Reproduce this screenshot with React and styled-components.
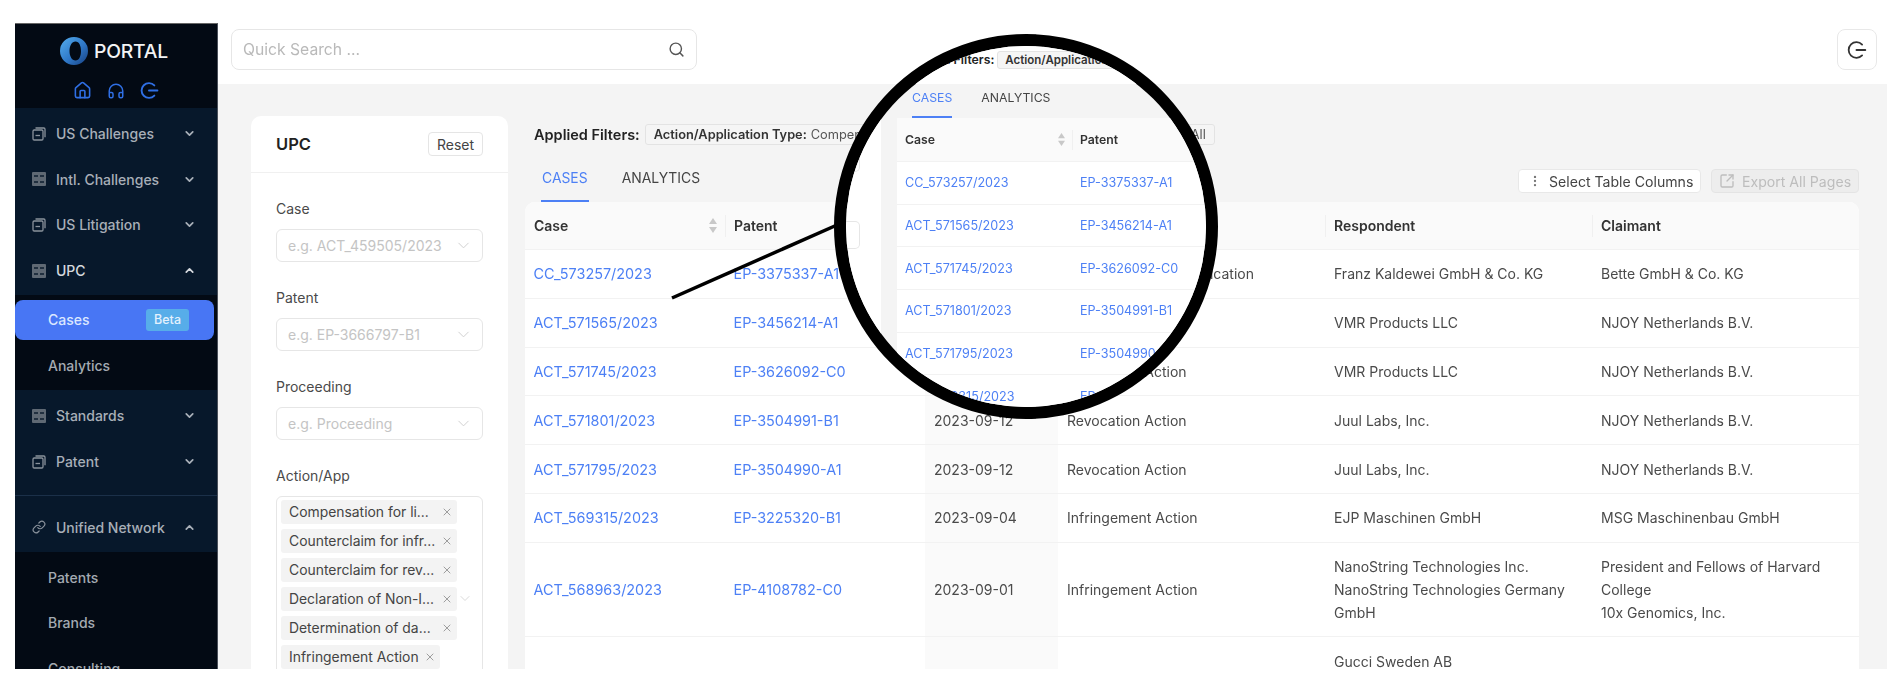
import React from "react";
import styled, { createGlobalStyle } from "styled-components";
import { ChevronDown, ChevronUp, Search, House, Headphones, Link as LinkIcon, EllipsisVertical, SquareArrowOutUpRight, X } from "lucide-react";

const Global = createGlobalStyle`
  html, body { margin: 0; padding: 0; background: #fff; }
  body { font-family: Inter, "Liberation Sans", sans-serif; color: #444; font-size: 14px; overflow: hidden; }
  * { box-sizing: border-box; }
`;

const Frame = styled.div`
  position: relative;
  display: flex;
  margin: 23px 13px 0 15px;
  height: 646px;
  overflow: hidden;
  filter: blur(0.6px);
`;

/* ---------- sidebar ---------- */
const Sidebar = styled.aside`
  width: 203px;
  flex: none;
  background: #030a14;
  border-right: 1px solid #4a505a;
  border-top: 1px solid #666;
  overflow: hidden;
`;
const Brand = styled.div`
  height: 84px;
  display: flex;
  flex-direction: column;
  align-items: center;
  padding-top: 13px;
`;
const LogoRow = styled.div`
  display: flex;
  align-items: center;
  gap: 6px;
  height: 28px;
  margin-right: 4px;
`;
const LogoText = styled.span`
  color: #f2f3f4;
  font-size: 19.3px;
  font-weight: 500;
  letter-spacing: -0.2px;
`;
const QuickIcons = styled.div`
  display: flex;
  align-items: center;
  gap: 15px;
  margin-top: 16px;
  color: #2f6fe4;
`;
const NavGroup = styled.div`
  background: #07182b;
  padding: ${p => p.$pad};
`;
const NavRow = styled.div`
  height: 45.6px;
  display: flex;
  align-items: center;
  padding: 0 21px 0 17px;
  gap: 10px;
  color: ${p => (p.$active ? "#d5d9de" : "#a8afb8")};
  font-weight: 500;
  font-size: 14px;
  span { flex: 1; white-space: nowrap; }
  svg { flex: none; }
`;
const Divider = styled.div`
  height: 1px;
  background: #1b3049;
  margin: 10.6px 0 8.5px;
`;
const SubGroup = styled.div`
  padding: ${p => p.$pad};
`;
const SubItem = styled.div`
  height: ${p => p.$h || 45.5}px;
  display: flex;
  align-items: center;
  padding-left: 33px;
  color: #a4aab2;
  font-weight: 500;
  font-size: 14px;
`;
const ActiveItem = styled.div`
  height: 40px;
  width: 199px;
  display: flex;
  align-items: center;
  justify-content: space-between;
  padding: 0 25px 0 33px;
  background: #4876f4;
  border-radius: 8px;
  color: #dbe7ff;
  font-weight: 500;
  font-size: 14px;
  margin-bottom: 6px;
`;
const Beta = styled.span`
  width: 43px;
  height: 22px;
  display: flex;
  align-items: center;
  justify-content: center;
  background: #57ade9;
  border-radius: 3px;
  font-size: 12.5px;
  color: #e3f1fd;
`;

/* ---------- main ---------- */
const Main = styled.main`
  flex: 1;
  min-width: 0;
  display: flex;
  flex-direction: column;
`;
const TopBar = styled.header`
  height: 61px;
  flex: none;
  display: flex;
  align-items: flex-start;
  justify-content: space-between;
  padding: 6px 10px 0 13px;
`;
const SearchBox = styled.div`
  width: 466px;
  height: 41px;
  display: flex;
  align-items: center;
  justify-content: space-between;
  padding: 0 11px;
  border: 1px solid #e6e6e6;
  border-radius: 8px;
  color: #b9b9b9;
  font-size: 15.7px;
  svg { color: #555; }
`;
const LogoutButton = styled.div`
  width: 40px;
  height: 41px;
  display: flex;
  align-items: center;
  justify-content: center;
  border: 1px solid #e8e8e8;
  border-radius: 8px;
  color: #333;
`;
const Content = styled.div`
  flex: 1;
  min-height: 0;
  display: flex;
  gap: 17px;
  padding: 32px 28px 0 33px;
  background: #f4f4f4;
  overflow: hidden;
`;

/* ---------- filter card ---------- */
const FilterCard = styled.section`
  width: 257px;
  flex: none;
  background: #fff;
  border-radius: 10px 10px 0 0;
`;
const CardHead = styled.div`
  height: 57px;
  display: flex;
  align-items: center;
  justify-content: space-between;
  padding: 0 25px;
  border-bottom: 1px solid #f0f0f0;
`;
const CardTitle = styled.h2`
  margin: 0;
  font-size: 16.5px;
  font-weight: 600;
  color: #222;
`;
const ResetButton = styled.div`
  width: 55px;
  height: 24px;
  display: flex;
  align-items: center;
  justify-content: center;
  border: 1px solid #e5e5e5;
  border-radius: 4px;
  font-size: 14px;
  color: #444;
`;
const CardBody = styled.div`
  padding: 26px 25px 0;
`;
const Field = styled.div`
  margin-bottom: 26.4px;
`;
const FieldLabel = styled.div`
  height: 20px;
  line-height: 20px;
  font-size: 14px;
  color: #4a4a4a;
  margin-bottom: 9.6px;
`;
const SelectBox = styled.div`
  height: 33px;
  display: flex;
  align-items: center;
  justify-content: space-between;
  padding: 0 9px 0 11px;
  border: 1px solid #e6e6e6;
  border-radius: 6px;
  color: #c4c4c4;
  font-size: 14px;
  svg { color: #cfcfcf; flex: none; }
`;
const MultiBox = styled.div`
  display: flex;
  align-items: center;
  justify-content: space-between;
  padding: 3px 9px 4px 4px;
  border: 1px solid #e6e6e6;
  border-radius: 6px;
  svg.chev { color: #cfcfcf; }
`;
const TagList = styled.div`
  display: flex;
  flex-direction: column;
  align-items: flex-start;
  gap: 5px;
`;
const Tag = styled.div`
  height: 24px;
  width: ${p => p.$w || 176}px;
  display: flex;
  align-items: center;
  justify-content: space-between;
  padding: 0 4px 0 8px;
  background: #f3f3f3;
  border-radius: 3px;
  font-size: 13.9px;
  color: #444;
  white-space: nowrap;
  svg { color: #888; flex: none; }
`;

/* ---------- results ---------- */
const Results = styled.section`
  flex: 1;
  min-width: 0;
  padding-top: 8px;
`;
const AppliedRow = styled.div`
  height: 21px;
  display: flex;
  align-items: center;
  gap: 5px;
  padding-left: 9px;
`;
const AppliedLabel = styled.strong`
  font-size: 14.5px;
  font-weight: 600;
  color: #222;
  white-space: nowrap;
`;
const AppliedTag = styled.div`
  width: 570px;
  height: 21px;
  display: flex;
  align-items: center;
  padding: 0 8px;
  background: #f5f5f5;
  border: 1px solid #e3e3e3;
  border-radius: 3px;
  font-size: 12.8px;
  color: #555;
  white-space: nowrap;
  overflow: hidden;
  b { font-weight: 600; color: #333; margin-right: 4px; }
  span { flex: 1; }
`;
const TabBar = styled.div`
  height: 57px;
  display: flex;
  align-items: flex-end;
  justify-content: space-between;
`;
const Tabs = styled.div`
  display: flex;
  gap: 32px;
  padding-left: 16px;
`;
const Tab = styled.div`
  padding: 0 1px 12px;
  line-height: 20px;
  font-size: 13.9px;
  color: ${p => (p.$active ? "#4d80f5" : "#444")};
  border-bottom: 2px solid ${p => (p.$active ? "#4d80f5" : "transparent")};
`;
const Tools = styled.div`
  display: flex;
  gap: 10px;
  margin-bottom: 9px;
`;
const ToolButton = styled.div`
  height: 24px;
  width: ${p => p.$w}px;
  display: flex;
  align-items: center;
  gap: 7px;
  padding-left: ${p => (p.$off ? 7 : 9)}px;
  font-size: 14.1px;
  white-space: nowrap;
  border: 1px solid ${p => (p.$off ? "#e4e4e4" : "#e8e8e8")};
  border-radius: 4px;
  background: ${p => (p.$off ? "#ededed" : "#fff")};
  color: ${p => (p.$off ? "#bdbdbd" : "#444")};
`;
const Table = styled.div`
  background: #fff;
  border-radius: 10px 10px 0 0;
  overflow: hidden;
`;
const Grid = styled.div`
  display: grid;
  grid-template-columns: 200px 200px 133px 267px 267px 267px;
`;
const HeadRow = styled(Grid)`
  height: 48px;
  background: #fafafa;
  border-bottom: 1px solid #f2f2f2;
`;
const HeadCell = styled.div`
  position: relative;
  display: flex;
  align-items: center;
  justify-content: space-between;
  padding: 0 8px 0 9px;
  font-weight: 600;
  font-size: 14px;
  color: #333;
  &:not(:first-child)::before {
    content: "";
    position: absolute;
    left: 0;
    top: 13px;
    height: 22px;
    width: 1px;
    background: #f0f0f0;
  }
`;
const Row = styled(Grid)`
  border-bottom: 1px solid #f2f2f2;
`;
const Cell = styled.div`
  display: flex;
  align-items: center;
  padding: 12.4px 9px;
  line-height: 23px;
  font-size: 14px;
  color: #4a4a4a;
  background: ${p => (p.$sorted ? "#fafafa" : "transparent")};
`;
const LinkCell = styled(Cell)`
  padding-left: 8.5px;
  font-size: 14.4px;
  color: #4d80f5;
`;
const MultiLine = styled.div`
  white-space: pre-line;
`;

/* ---------- magnifier overlay ---------- */
const Pointer = styled.svg`
  position: absolute;
  left: 0;
  top: 0;
  width: 100%;
  height: 100%;
  pointer-events: none;
`;
const Lens = styled.div`
  position: absolute;
  left: 819px;
  top: 11px;
  width: 384px;
  height: 385px;
  border: 12px solid #000;
  border-radius: 50%;
  background: #f4f4f4;
  overflow: hidden;
`;
const LensTop = styled.div`
  height: 38px;
  background: #fff;
  display: flex;
  align-items: flex-start;
  padding: 5px 0 0 59px;
  gap: 3px;
`;
const LensLabel = styled.strong`
  line-height: 18px;
  font-size: 12.25px;
  font-weight: 600;
  color: #222;
  white-space: nowrap;
`;
const LensTag = styled.div`
  width: 190px;
  height: 18px;
  padding-left: 7px;
  line-height: 16px;
  font-size: 11.5px;
  font-weight: 600;
  color: #333;
  background: #f5f5f5;
  border: 1px solid #e3e3e3;
  border-radius: 3px;
  white-space: nowrap;
  overflow: hidden;
`;
const LensBody = styled.div`
  display: flex;
  gap: 16px;
`;
const LensFilter = styled.div`
  width: 35px;
  flex: none;
  margin-top: 30px;
  padding-top: 30px;
  height: 320px;
  background: #fff;
  display: flex;
  flex-direction: column;
  gap: 49px;
`;
const LensInput = styled.div`
  width: 14px;
  height: 28px;
  border: 1px solid #e6e6e6;
  border-left: 0;
  border-radius: 0 5px 5px 0;
`;
const LensMain = styled.div`
  flex: 1;
`;
const LensTabs = styled.div`
  height: 34px;
  display: flex;
  align-items: flex-end;
  gap: 29px;
  padding-left: 15px;
`;
const LensTab = styled.div`
  padding-bottom: 10px;
  line-height: 16px;
  font-size: 12.25px;
  color: ${p => (p.$active ? "#4d80f5" : "#444")};
  border-bottom: 2px solid ${p => (p.$active ? "#4d80f5" : "transparent")};
`;
const LensTable = styled.div`
  background: #fff;
  border-radius: 9px 0 0 0;
`;
const LensGrid = styled.div`
  display: grid;
  grid-template-columns: 175px 175px;
`;
const LensHead = styled(LensGrid)`
  height: 44px;
  background: #fafafa;
  border-bottom: 1px solid #f2f2f2;
`;
const LensHeadCell = styled(HeadCell)`
  font-size: 12.25px;
  padding: 0 7px 0 8px;
  &:not(:first-child)::before { top: 12px; height: 20px; }
`;
const LensRow = styled(LensGrid)`
  height: 42.7px;
  border-bottom: 1px solid #f2f2f2;
  align-items: center;
  font-size: 12.6px;
  color: #4d80f5;
  span { padding-left: 8px; }
`;

/* ---------- drawn icons ---------- */
const StackIcon = () => (
  <svg width="14" height="14" viewBox="0 0 14 14" fill="none" stroke="#8a929c" strokeWidth="1.3">
    <rect x="1" y="3" width="10" height="10" rx="1.2" />
    <path d="M3.5 1h8.3a1.2 1.2 0 0 1 1.2 1.2v8" />
    <path d="M3.5 8.5h4.5" />
  </svg>
);
const GridIcon = () => (
  <svg width="14" height="14" viewBox="0 0 14 14">
    <rect width="14" height="14" rx="1" fill="#5f6974" />
    <rect x="2" y="3" width="4" height="2" fill="#07182b" opacity=".7" />
    <rect x="8" y="3" width="4" height="2" fill="#07182b" opacity=".7" />
    <rect x="2" y="9" width="4" height="2" fill="#07182b" opacity=".7" />
    <rect x="8" y="9" width="4" height="2" fill="#07182b" opacity=".7" />
  </svg>
);
const PowerIcon = ({ size = 18, width = 1.8 }) => (
  <svg width={size} height={size} viewBox="0 0 18 18" fill="none" stroke="currentColor" strokeWidth={width} strokeLinecap="round">
    <path d="M13.6 4.2A7 7 0 1 0 13.6 13.8" />
    <path d="M8.5 9H16.5" />
  </svg>
);
const Logo = () => (
  <svg width="28" height="28" viewBox="0 0 28 28">
    <defs>
      <linearGradient id="ring" x1="0" y1="0" x2="1" y2="1">
        <stop offset="0" stopColor="#55aeee" />
        <stop offset="0.55" stopColor="#2f78c8" />
        <stop offset="1" stopColor="#173f80" />
      </linearGradient>
    </defs>
    <path
      fillRule="evenodd"
      fill="url(#ring)"
      d="M14 0a14 14 0 1 1 0 28a14 14 0 1 1 0-28ZM15.5 4.5c-3.6 0-6 4.2-6 9.5s2.4 9.5 6 9.5s5.5-4.2 5.5-9.5s-1.9-9.5-5.5-9.5Z"
    />
  </svg>
);
const SortIcon = ({ w = 8, h = 17 }) => (
  <svg width={w} height={h} viewBox="0 0 8 17" fill="#c8c8c8">
    <path d="M4 1l4 6H0z" />
    <path d="M4 16L0 10h8z" />
  </svg>
);

const rows = [
  ["CC_573257/2023", "EP-3375337-A1", "2023-09-18", "Protective Letter Application", "Franz Kaldewei GmbH & Co. KG", "Bette GmbH & Co. KG"],
  ["ACT_571565/2023", "EP-3456214-A1", "2023-09-13", "Revocation Action", "VMR Products LLC", "NJOY Netherlands B.V."],
  ["ACT_571745/2023", "EP-3626092-C0", "2023-09-13", "Revocation Action", "VMR Products LLC", "NJOY Netherlands B.V."],
  ["ACT_571801/2023", "EP-3504991-B1", "2023-09-12", "Revocation Action", "Juul Labs, Inc.", "NJOY Netherlands B.V."],
  ["ACT_571795/2023", "EP-3504990-A1", "2023-09-12", "Revocation Action", "Juul Labs, Inc.", "NJOY Netherlands B.V."],
  ["ACT_569315/2023", "EP-3225320-B1", "2023-09-04", "Infringement Action", "EJP Maschinen GmbH", "MSG Maschinenbau GmbH"],
  ["ACT_568963/2023", "EP-4108782-C0", "2023-09-01", "Infringement Action", "NanoString Technologies Inc.\nNanoString Technologies Germany GmbH", "President and Fellows of Harvard College\n10x Genomics, Inc."],
  ["", "", "", "", "Gucci Sweden AB", ""],
];

const tags = [
  ["Compensation for li...", 176],
  ["Counterclaim for infr...", 176],
  ["Counterclaim for rev...", 176],
  ["Declaration of Non-I...", 176],
  ["Determination of da...", 176],
  ["Infringement Action", 159],
  ["Provisional Measures", 176],
];

const chev = { size: 13, strokeWidth: 3.2, color: "#a8afb8" };
const selChev = { size: 19, strokeWidth: 1.2 };

export default function App() {
  return (
    <>
      <Global />
      <Frame>
        <Sidebar>
          <Brand>
            <LogoRow>
              <Logo />
              <LogoText>PORTAL</LogoText>
            </LogoRow>
            <QuickIcons>
              <House size={19} strokeWidth={2} />
              <Headphones size={18} strokeWidth={2} />
              <PowerIcon size={19} />
            </QuickIcons>
          </Brand>
          <NavGroup $pad="3px 0 2px">
            <NavRow><StackIcon /><span>US Challenges</span><ChevronDown {...chev} /></NavRow>
            <NavRow><GridIcon /><span>Intl. Challenges</span><ChevronDown {...chev} /></NavRow>
            <NavRow><StackIcon /><span>US Litigation</span><ChevronDown {...chev} /></NavRow>
            <NavRow $active><GridIcon /><span>UPC</span><ChevronUp {...chev} color="#d5d9de" /></NavRow>
          </NavGroup>
          <SubGroup $pad="4.6px 0 4px">
            <ActiveItem>Cases<Beta>Beta</Beta></ActiveItem>
            <SubItem $h={40}>Analytics</SubItem>
          </SubGroup>
          <NavGroup $pad="3.2px 0 2px">
            <NavRow><GridIcon /><span>Standards</span><ChevronDown {...chev} /></NavRow>
            <NavRow><StackIcon /><span>Patent</span><ChevronDown {...chev} /></NavRow>
            <Divider />
            <NavRow><LinkIcon size={14} color="#8a929c" /><span>Unified Network</span><ChevronUp {...chev} /></NavRow>
          </NavGroup>
          <SubGroup $pad="2.3px 0">
            <SubItem>Patents</SubItem>
            <SubItem>Brands</SubItem>
            <SubItem>Consulting</SubItem>
          </SubGroup>
        </Sidebar>

        <Main>
          <TopBar>
            <SearchBox>Quick Search ...<Search size={17} /></SearchBox>
            <LogoutButton><PowerIcon size={20} width={1.6} /></LogoutButton>
          </TopBar>
          <Content>
            <FilterCard>
              <CardHead>
                <CardTitle>UPC</CardTitle>
                <ResetButton>Reset</ResetButton>
              </CardHead>
              <CardBody>
                <Field>
                  <FieldLabel>Case</FieldLabel>
                  <SelectBox>e.g. ACT_459505/2023<ChevronDown {...selChev} /></SelectBox>
                </Field>
                <Field>
                  <FieldLabel>Patent</FieldLabel>
                  <SelectBox>e.g. EP-3666797-B1<ChevronDown {...selChev} /></SelectBox>
                </Field>
                <Field>
                  <FieldLabel>Proceeding</FieldLabel>
                  <SelectBox>e.g. Proceeding<ChevronDown {...selChev} /></SelectBox>
                </Field>
                <Field>
                  <FieldLabel>Action/App</FieldLabel>
                  <MultiBox>
                    <TagList>
                      {tags.map(([t, w]) => (
                        <Tag key={t} $w={w}>{t}<X size={12} strokeWidth={1.6} /></Tag>
                      ))}
                    </TagList>
                    <ChevronDown className="chev" {...selChev} />
                  </MultiBox>
                </Field>
              </CardBody>
            </FilterCard>

            <Results>
              <AppliedRow>
                <AppliedLabel>Applied Filters:</AppliedLabel>
                <AppliedTag>
                  <b>Action/Application Type:</b>
                  <span>Compensation for licence of right</span>
                  All
                </AppliedTag>
              </AppliedRow>
              <TabBar>
                <Tabs>
                  <Tab $active>CASES</Tab>
                  <Tab>ANALYTICS</Tab>
                </Tabs>
                <Tools>
                  <ToolButton $w={183}>
                    <EllipsisVertical size={14} color="#777" />
                    <span>Select Table Columns</span>
                  </ToolButton>
                  <ToolButton $w={148} $off>
                    <SquareArrowOutUpRight size={16} />
                    <span>Export All Pages</span>
                  </ToolButton>
                </Tools>
              </TabBar>
              <Table>
                <HeadRow>
                  <HeadCell>Case<SortIcon /></HeadCell>
                  <HeadCell>Patent</HeadCell>
                  <HeadCell>Date</HeadCell>
                  <HeadCell>Type</HeadCell>
                  <HeadCell>Respondent</HeadCell>
                  <HeadCell>Claimant</HeadCell>
                </HeadRow>
                {rows.map((r, i) => (
                  <Row key={i}>
                    <LinkCell>{r[0]}</LinkCell>
                    <LinkCell>{r[1]}</LinkCell>
                    <Cell $sorted>{r[2]}</Cell>
                    <Cell>{r[3]}</Cell>
                    <Cell><MultiLine>{r[4]}</MultiLine></Cell>
                    <Cell><MultiLine>{r[5]}</MultiLine></Cell>
                  </Row>
                ))}
              </Table>
            </Results>
          </Content>
        </Main>

        <Pointer viewBox="0 0 1872 646">
          <path d="M657 275L822 202" stroke="#000" strokeWidth="3.5" />
        </Pointer>
        <Lens>
          <LensTop>
            <LensLabel>Applied Filters:</LensLabel>
            <LensTag>Action/Application Type:</LensTag>
          </LensTop>
          <LensBody>
            <LensFilter>
              <LensInput />
              <LensInput />
            </LensFilter>
            <LensMain>
              <LensTabs>
                <LensTab $active>CASES</LensTab>
                <LensTab>ANALYTICS</LensTab>
              </LensTabs>
              <LensTable>
                <LensHead>
                  <LensHeadCell>Case<SortIcon w={7} h={15} /></LensHeadCell>
                  <LensHeadCell>Patent</LensHeadCell>
                </LensHead>
                {rows.slice(0, 6).map(r => (
                  <LensRow key={r[0]}>
                    <span>{r[0]}</span>
                    <span>{r[1]}</span>
                  </LensRow>
                ))}
              </LensTable>
            </LensMain>
          </LensBody>
        </Lens>
      </Frame>
    </>
  );
}
